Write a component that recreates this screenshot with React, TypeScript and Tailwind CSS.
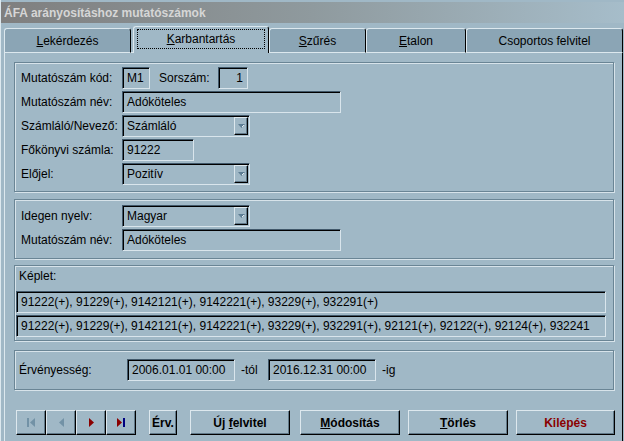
import type { ReactNode } from 'react';

const sunken =
  'border border-t-[#41586a] border-l-[#41586a] border-r-[#d9e5ec] border-b-[#d9e5ec] shadow-[inset_1px_1px_0_#000]';
const raised =
  'border border-t-[#dde8ee] border-l-[#dde8ee] border-r-black border-b-black shadow-[inset_-1px_-1px_0_#607888]';
const etched =
  'border border-[#6a8595] shadow-[inset_1px_1px_0_#d7e3ea,1px_1px_0_#d7e3ea]';

const Field = ({ w, children, right }: { w: string; children?: ReactNode; right?: boolean }) => (
  <div className={`${w} h-[22px] ${sunken} flex items-center px-[4px] overflow-hidden whitespace-nowrap ${right ? 'justify-end' : ''}`}>
    {children}
  </div>
);

const Combo = ({ value }: { value: string }) => (
  <div className={`w-[128px] h-[22px] ${sunken} flex items-center pl-[4px] pr-[1px]`}>
    <span className="flex-1">{value}</span>
    <div className={`w-[14px] h-[18px] ${raised} flex items-center justify-center`}>
      <svg width="7" height="4" viewBox="0 0 7 4">
        <path d="M0 0h7L3.5 4z" fill="#5d7d93" />
        <path d="M4 3l2-2" stroke="#e6eef2" strokeWidth="1" />
      </svg>
    </div>
  </div>
);

const Row = ({ label, children }: { label: string; children: ReactNode }) => (
  <div className="flex items-center h-[22px]">
    <span className="w-[101px]">{label}</span>
    {children}
  </div>
);

const Tab = ({ children, w, active }: { children: ReactNode; w: string; active?: boolean }) =>
  active ? (
    <div className={`${w} h-[27px] bg-[#a0b8c6] border-t border-l border-[#dce8ee] border-r border-r-black rounded-t-[3px] flex items-center justify-center px-[3px] pb-[2px]`}>
      <div className="w-full h-[20px] border border-dotted border-black flex items-center justify-center">{children}</div>
    </div>
  ) : (
    <div className={`${w} h-[25px] bg-[#8ba5b5] border-t border-l border-[#dce8ee] border-r border-r-black border-b border-b-[#dce8ee] rounded-t-[3px] flex items-center justify-center`}>
      {children}
    </div>
  );

const NavBtn = ({ children }: { children: ReactNode }) => (
  <button className={`w-[30px] h-[25px] ${raised} flex items-center justify-center`}>{children}</button>
);

const Btn = ({ w, children, red }: { w: string; children: ReactNode; red?: boolean }) => (
  <button className={`${w} h-[25px] ${raised} font-bold flex items-center justify-center ${red ? 'text-[#8a0000]' : ''}`}>
    <span>{children}</span>
  </button>
);

export default function App() {
  return (
    <div className="w-[624px] h-[441px] bg-[#a0b8c6] overflow-hidden font-['Liberation_Sans',Arial,sans-serif] text-[12px] text-black border-l border-l-[#dce8ee] pt-[2px]">
      {/* Title bar */}
      <div className="h-[21px] bg-gradient-to-r from-[#7f7f7f] via-[#8f9a9e] to-[#a6bdca] flex items-center pl-[3px] font-bold text-[#d6d6d6]">
        ÁFA arányosításhoz mutatószámok
      </div>

      {/* Tabs */}
      <div className="h-[30px] flex items-end pl-[3px]">
        <Tab w="w-[127px]"><span><u>L</u>ekérdezés</span></Tab>
        <div className="w-[2px] h-[1px] bg-[#dce8ee]" />
        <Tab w="w-[136px]" active><span><u>K</u>arbantartás</span></Tab>
        <Tab w="w-[97px]"><span><u>S</u>zűrés</span></Tab>
        <Tab w="w-[100px]"><span><u>E</u>talon</span></Tab>
        <Tab w="w-[157px]"><span>Csoportos felvitel</span></Tab>
      </div>

      {/* Panel */}
      <div className="ml-[3px] w-[619px] h-[388px] border-l border-l-[#dce8ee] border-r border-r-black flex flex-col pl-[9px] pt-[9px]">
        {/* Group 1 */}
        <div className={`w-[600px] h-[130px] ${etched} pl-[6px] pt-[4px] flex flex-col gap-[2px]`}>
          <Row label="Mutatószám kód:">
            <Field w="w-[28px]">M1</Field>
            <span className="ml-[9px] w-[59px]">Sorszám:</span>
            <Field w="w-[30px]" right>1</Field>
          </Row>
          <Row label="Mutatószám név:">
            <Field w="w-[219px]">Adóköteles</Field>
          </Row>
          <Row label="Számláló/Nevező:">
            <Combo value="Számláló" />
          </Row>
          <Row label="Főkönyvi számla:">
            <Field w="w-[72px]">91222</Field>
          </Row>
          <Row label="Előjel:">
            <Combo value="Pozitív" />
          </Row>
        </div>

        {/* Group 2 */}
        <div className={`mt-[7px] w-[600px] h-[60px] ${etched} pl-[6px] pt-[5px] flex flex-col gap-[2px]`}>
          <Row label="Idegen nyelv:">
            <Combo value="Magyar" />
          </Row>
          <Row label="Mutatószám név:">
            <Field w="w-[219px]">Adóköteles</Field>
          </Row>
        </div>

        {/* Group 3 */}
        <div className={`mt-[6px] w-[600px] h-[76px] ${etched} pl-[1px] flex flex-col`}>
          <div className="h-[25px] pl-[3px] pt-[2px] leading-[16px]">Képlet:</div>
          <Field w="w-[590px]">91222(+), 91229(+), 9142121(+), 9142221(+), 93229(+), 932291(+)</Field>
          <div className="h-[2px]" />
          <Field w="w-[590px]">
            91222(+), 91229(+), 9142121(+), 9142221(+), 93229(+), 932291(+), 92121(+), 92122(+), 92124(+), 932241
          </Field>
        </div>

        {/* Group 4 */}
        <div className={`mt-[9px] w-[600px] h-[40px] ${etched} pl-[4px] flex items-center`}>
          <span className="w-[108px]">Érvényesség:</span>
          <Field w="w-[108px]">2006.01.01 00:00</Field>
          <span className="w-[33px] pl-[6px]">-tól</span>
          <Field w="w-[108px]">2016.12.31 00:00</Field>
          <span className="pl-[6px]">-ig</span>
        </div>

        {/* Buttons */}
        <div className="mt-[20px] flex items-center pl-[2px]">
          <NavBtn>
            <svg width="10" height="11" viewBox="0 0 10 11">
              <rect x="1" y="1" width="2" height="9" fill="#7292a6" />
              <path d="M9 1v9L4 5.5z" fill="#7292a6" />
            </svg>
          </NavBtn>
          <NavBtn>
            <svg width="7" height="11" viewBox="0 0 7 11">
              <path d="M6 1v9L1 5.5z" fill="#7292a6" />
            </svg>
          </NavBtn>
          <NavBtn>
            <svg width="7" height="11" viewBox="0 0 7 11">
              <path d="M1 1v9l5-4.5z" fill="#8a0000" />
            </svg>
          </NavBtn>
          <NavBtn>
            <svg width="10" height="11" viewBox="0 0 10 11">
              <path d="M1 1v9l5-4.5z" fill="#8a0000" />
              <rect x="7" y="1" width="2" height="9" fill="#000080" />
            </svg>
          </NavBtn>
          <Btn w="ml-[13px] w-[28px]">Érv.</Btn>
          <Btn w="ml-[13px] w-[100px]">Új <u>f</u>elvitel</Btn>
          <Btn w="ml-[10px] w-[100px]"><u>M</u>ódosítás</Btn>
          <Btn w="ml-[8px] w-[100px]"><u>T</u>örlés</Btn>
          <Btn w="ml-[8px] w-[99px]" red>Kilépés</Btn>
        </div>
      </div>
    </div>
  );
}
